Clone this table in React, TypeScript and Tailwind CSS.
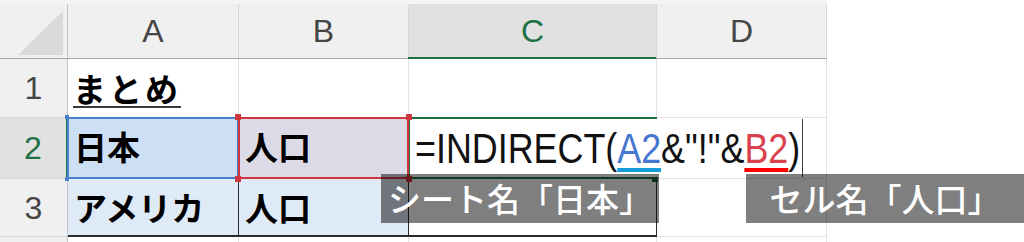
import * as React from 'react';

const sans = "font-['Liberation_Sans',Arial,sans-serif]";
const jp = "font-['Noto_Sans_CJK_JP',sans-serif]";

function RowHead({ n, active }: { n: string; active?: boolean }) {
  return (
    <div
      className={
        'w-[68px] shrink-0 flex items-center justify-center border-b border-[#d4d4d4] text-[32px] ' +
        sans +
        (active
          ? ' bg-[#e1e1e1] text-[#1e7145] border-r-2 border-r-[#1e7145]'
          : ' bg-[#f0f0f0] text-[#454545] border-r border-r-[#c4c4c4]')
      }
    >
      {n}
    </div>
  );
}

export default function App() {
  return (
    <div className="relative w-[1024px] h-[242px] overflow-hidden bg-white">
      <div className="w-[827px]">
        <div className="h-[4px] bg-[#f3f4f6]" />

        {/* column headers */}
        <div className={`flex h-[55px] bg-[#f0f0f0] border-b border-[#a6a6a6] text-[32px] text-[#454545] ${sans}`}>
          <div className="relative w-[68px] shrink-0 border-r border-[#c4c4c4]">
            <svg className="absolute right-[4px] bottom-[3px]" width="45" height="44" viewBox="0 0 45 44">
              <polygon points="45,0 45,44 0,44" fill="#dadada" />
            </svg>
          </div>
          <div className="w-[171px] shrink-0 flex items-center justify-center border-r border-[#d8d8d8]">A</div>
          <div className="w-[170px] shrink-0 flex items-center justify-center border-r border-[#d8d8d8]">B</div>
          <div className="relative w-[248px] shrink-0 flex items-center justify-center border-r border-[#d8d8d8] bg-[#e1e1e1] text-[#1e7145]">
            C
            <div className="absolute -left-px right-0 -bottom-px h-[2px] bg-[#1e7145]" />
          </div>
          <div className="w-[170px] shrink-0 flex items-center justify-center border-r border-[#d8d8d8]">D</div>
        </div>

        {/* row 1 */}
        <div className="flex h-[59px]">
          <RowHead n="1" />
          <div className="w-[171px] shrink-0 flex items-center pl-[5px] border-r border-b border-[#e1e1e1]">
            <span className={`${jp} text-[33px] tracking-[3px] font-bold text-black leading-none underline decoration-2 decoration-[#3a3a3a] underline-offset-[4px]`}>
              まとめ
            </span>
          </div>
          <div className="w-[170px] shrink-0 border-r border-b border-[#e1e1e1]" />
          <div className="w-[248px] shrink-0 border-r border-b border-[#e1e1e1]" />
          <div className="w-[170px] shrink-0 border-r border-b border-[#e1e1e1]" />
        </div>

        {/* row 2 */}
        <div className="flex h-[61px]">
          <RowHead n="2" active />
          <div className="relative w-[171px] shrink-0 flex items-center pl-[6px] pb-[4px] bg-[#cddff3] border-r border-b border-[#e1e1e1]">
            <span className={`${jp} text-[33px] font-bold text-black leading-none`}>日本</span>
            <div className="absolute -top-px -left-px -right-px -bottom-px border-2 border-[#4a7fd3]">
              <div className="absolute -top-[4px] -left-[4px] w-[4px] h-[4px] bg-[#4a7fd3]" />
              <div className="absolute -bottom-[4px] -left-[4px] w-[4px] h-[4px] bg-[#4a7fd3]" />
            </div>
          </div>
          <div className="relative w-[170px] shrink-0 flex items-center pl-[6px] pb-[4px] bg-[#dcdae7] border-r border-b border-[#e1e1e1]">
            <span className={`${jp} text-[33px] font-bold text-black leading-none`}>人口</span>
          </div>
          <div className="relative w-[248px] shrink-0 border-r border-b border-[#e1e1e1]">
            <div className="absolute -top-px -left-px -right-px -bottom-px border-t-2 border-l-2 border-b-2 border-[#1e7145]" />
            <div className={`absolute left-[1px] top-[1px] bottom-[1px] w-[393px] z-10 flex items-center pl-[5px] bg-white border-r border-[#404040] text-[43px] leading-none text-[#111] ${sans}`}>
              <span className="inline-block whitespace-nowrap origin-left scale-x-[0.834]">
                <span>=INDIRECT(</span>
                <span className="text-[#4576d0] underline decoration-4 decoration-[#169ad8] underline-offset-[5px]">A2</span>
                <span>&amp;"!"&amp;</span>
                <span className="text-[#d9414c] underline decoration-4 decoration-[#ff0000] underline-offset-[5px]">B2</span>
                <span>)</span>
              </span>
            </div>
            <div className="absolute z-20 left-[243px] bottom-[-4px] w-[6px] h-[5px] bg-[#1e5e38]" />
          </div>
          <div className="w-[170px] shrink-0 border-r border-b border-[#e1e1e1]" />
        </div>

        {/* row 3 */}
        <div className="flex h-[58px]">
          <RowHead n="3" />
          <div className="w-[171px] shrink-0 flex items-center pl-[6px] bg-[#deebf7] border-r border-b-2 border-[#2b2b2b]">
            <span className={`${jp} text-[33px] font-bold text-black leading-none`}>アメリカ</span>
          </div>
          <div className="w-[170px] shrink-0 flex items-center pl-[6px] bg-[#deebf7] border-r border-b-2 border-[#2b2b2b]">
            <span className={`${jp} text-[33px] font-bold text-black leading-none`}>人口</span>
          </div>
          <div className="w-[248px] shrink-0 border-r border-b-2 border-[#2b2b2b]" />
          <div className="w-[170px] shrink-0 border-r border-b border-[#e1e1e1]" />
        </div>

        {/* row 4 */}
        <div className="flex h-[10px]">
          <div className="w-[68px] shrink-0 bg-[#f0f0f0] border-r border-[#c4c4c4]" />
          <div className="w-[171px] shrink-0 border-r border-[#e1e1e1]" />
          <div className="w-[170px] shrink-0 border-r border-[#e1e1e1]" />
          <div className="w-[248px] shrink-0 border-r border-[#e1e1e1]" />
          <div className="w-[170px] shrink-0 border-r border-[#e1e1e1]" />
        </div>
      </div>

      {/* B2 reference outline drawn over the grid */}
      <div className="absolute left-[238px] top-[117px] w-[171px] h-[62px] border-2 border-[#d0353f] z-20">
        <div className="absolute -top-[5px] -left-[5px] w-[6px] h-[6px] bg-[#d0353f]" />
        <div className="absolute -top-[5px] -right-[5px] w-[6px] h-[6px] bg-[#d0353f]" />
        <div className="absolute -bottom-[5px] -left-[5px] w-[6px] h-[6px] bg-[#d0353f]" />
        <div className="absolute -bottom-[5px] -right-[5px] w-[6px] h-[6px] bg-[#d0353f]" />
      </div>

      {/* annotation labels */}
      <div className={`absolute z-30 left-[381px] top-[174px] w-[278px] h-[49px] flex items-center justify-center bg-black/50 text-white text-[33px] font-medium leading-none ${jp}`}>
        シート名「日本」
      </div>
      <div className={`absolute z-30 left-[746px] top-[174px] w-[278px] h-[49px] flex items-center justify-center bg-black/50 text-white text-[33px] font-medium leading-none ${jp}`}>
        セル名「人口」
      </div>
    </div>
  );
}
